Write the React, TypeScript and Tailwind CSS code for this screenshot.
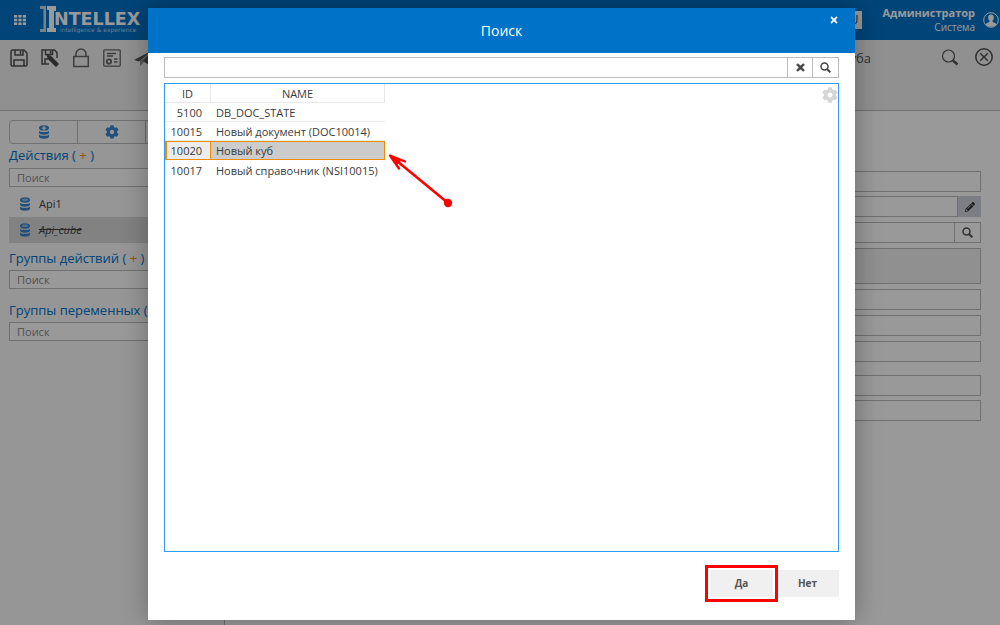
import React from 'react'
import { FaTimes, FaCog, FaPencilAlt } from 'react-icons/fa'

const rows = [
  { id: '5100', name: 'DB_DOC_STATE' },
  { id: '10015', name: 'Новый документ (DOC10014)' },
  { id: '10020', name: 'Новый куб', selected: true },
  { id: '10017', name: 'Новый справочник (NSI10015)' },
]

function Logo() {
  return (
    <svg width="104" height="30" viewBox="0 0 104 30" role="img" aria-label="Intellex">
      <path d="M0 1h6v26H0v-3h3.500V4H0z" fill="#c9d9e8" />
      <path d="M7 1h9v5h-2v17h2v4H7v-4h2V5H7z" fill="#fff" />
      <text x="14" y="20" fill="#fff" fontSize="17.5" fontWeight="700" fontFamily="DejaVu Sans, sans-serif">
        NTELLEX
      </text>
      <text x="20" y="27" fill="#b9d3ea" fontSize="6" fontFamily="DejaVu Sans, sans-serif">
        intelligence &amp; experience
      </text>
    </svg>
  )
}

function AppsIcon() {
  return (
    <svg width="12" height="10" viewBox="0 0 12 10" fill="#fff">
      {[0, 3.7, 7.4].map((y) =>
        [0, 4.4, 8.8].map((x) => (
          <rect key={x + '-' + y} x={x} y={y} width="3.2" height="2.6" />
        ))
      )}
    </svg>
  )
}

function SaveIcon({ edit = false }: { edit?: boolean }) {
  return (
    <svg width="18" height="18" viewBox="0 0 18 18" fill="none" stroke="#505050" strokeWidth="1.5">
      {edit ? (
        <>
          <path d="M8 15H1V1h12.500L16 3.500V9M4.500 1v4.500h7V1M9.500 2v2.500M4 15v-5h3" />
          <path d="M6.500 6.500l3 1 7.500 7.500-2 2L7.500 9.500z" fill="#484848" stroke="#484848" />
        </>
      ) : (
        <>
          <path d="M1 2.500Q1 1 2.500 1H14l3 3v11.500q0 1.500-1.500 1.500h-13Q1 17 1 15.500z" />
          <path d="M5 1v5h8V1M10.500 2v3M4 17v-6h10v6" />
        </>
      )}
    </svg>
  )
}

function LockIcon() {
  return (
    <svg width="18" height="20" viewBox="-1 0 18 20" fill="none" stroke="#666" strokeWidth="1.500">
      <rect x="0.750" y="8.500" width="14.500" height="10" />
      <path d="M3 8.500V6a5 5 0 0 1 10 0v2.500" />
    </svg>
  )
}

function CertificateIcon() {
  return (
    <svg width="18" height="18" viewBox="0 0 18 18" fill="none" stroke="#666" strokeWidth="1.300">
      <rect x="0.800" y="0.800" width="16.400" height="16.400" rx="1" />
      <path d="M4 4.500h9M4 7h6M11 10h3.500M11 13h3.500" />
      <circle cx="6" cy="12.500" r="2.200" strokeWidth="1.800" />
    </svg>
  )
}

function SendIcon() {
  return (
    <svg width="20" height="18" viewBox="0 0 20 18" fill="#505050">
      <path d="M19 1L0 11l5 1.500z" />
      <path d="M19 1L6 12v5l3-3z" opacity="0.600" />
      <path d="M19 1L9 12l6 4z" />
    </svg>
  )
}

function DatabaseIcon({ plus = false }: { plus?: boolean }) {
  return (
    <svg width="12" height="14" viewBox="0 0 12 14" fill="#3a86cc">
      <path d="M1 9.200c0 2 10 2 10 0v2.200c0 3-10 3-10 0z" />
      <path d="M1 5.400c0 2 10 2 10 0v2.200c0 3-10 3-10 0z" />
      <ellipse cx="6" cy="3" rx="5" ry="2.800" />
      {plus ? (
        <path d="M6 1v4.500M3.800 3.200h4.400" stroke="#fff" strokeWidth="1.200" />
      ) : (
        <ellipse cx="6" cy="2.800" rx="3.200" ry="1.200" fill="#8dbbe4" />
      )}
    </svg>
  )
}

function UserIcon() {
  return (
    <svg width="16" height="16" viewBox="0 0 16 16">
      <circle cx="8" cy="8" r="7.300" fill="none" stroke="#fff" />
      <path d="M8 2.500c2.200 0 3 1.500 2.800 3.500-.1 1.300-.7 2.200-1.300 2.800v1l3.300 1.700c.6.400.5 1 .2 1.300-2.600 2.700-7.400 2.700-10 0-.3-.3-.4-.9.200-1.300l3.300-1.700v-1C5.900 8.200 5.300 7.300 5.200 6 5 4 5.800 2.500 8 2.500z" fill="#fff" />
    </svg>
  )
}

function FindIcon() {
  return (
    <svg width="18" height="18" viewBox="0 0 18 18" fill="none" stroke="#555">
      <circle cx="7.500" cy="8" r="6" strokeWidth="1.200" />
      <path d="M12 12.500l4.500 4" strokeWidth="2.500" />
    </svg>
  )
}

function SmallFindIcon() {
  return (
    <svg width="11" height="11" viewBox="0 0 11 11" fill="none" stroke="currentColor" strokeWidth="1.500">
      <circle cx="4.500" cy="4.500" r="3.500" />
      <path d="M7 7l3.300 3.300" strokeWidth="2" />
    </svg>
  )
}

function CloseCircleIcon() {
  return (
    <svg width="18" height="18" viewBox="0 0 18 18" fill="none" stroke="#505050" strokeWidth="1.500">
      <circle cx="9" cy="9" r="8.200" />
      <path d="M5.200 5.200l7.600 7.600M12.800 5.200l-7.600 7.600" />
    </svg>
  )
}

function SideSearch({ label }: { label: string }) {
  return (
    <input
      type="text"
      placeholder="Поиск"
      aria-label={label}
      className="block h-[19px] w-full border border-[#bbb] bg-white px-[7px] text-[11px] placeholder:text-[#888]"
    />
  )
}

function SideTitle({ children }: { children: React.ReactNode }) {
  return (
    <h2 className="whitespace-nowrap text-[13px] leading-5 text-[#0072c8]">
      {children} ( <span className="text-[#f08c00]">+</span> )
    </h2>
  )
}

function Field({ label }: { label: string }) {
  return <input type="text" aria-label={label} className="block h-[21px] w-full border border-[#bbb] bg-white px-2" />
}

function Sidebar() {
  return (
    <aside className="w-[225px] shrink-0 border-r border-[#bbb] bg-[#fafafa] px-[9px] pt-[9px]">
      <div className="grid h-6 grid-cols-3 rounded-sm border border-[#bbb]">
        <button aria-label="Данные" className="flex items-center justify-center border-r border-[#bbb]">
          <DatabaseIcon plus />
        </button>
        <button aria-label="Настройки" className="flex items-center justify-center border-r border-[#bbb]">
          <FaCog className="size-[14px] text-[#3a86cc]" />
        </button>
        <button aria-label="Ещё"></button>
      </div>
      <div className="pt-px pb-[3px]">
        <SideTitle>Действия</SideTitle>
      </div>
      <SideSearch label="Поиск действий" />
      <ul className="mt-1 text-[11px] text-[#444]">
        <li className="flex h-[26px] items-center gap-2 pl-[10px]">
          <DatabaseIcon /> Api1
        </li>
        <li className="flex h-[26px] items-center gap-2 bg-[#d9d9d9] pl-[10px]">
          <DatabaseIcon /> <span className="italic line-through">Api_cube</span>
        </li>
      </ul>
      <div className="pt-[5px] pb-0.5">
        <SideTitle>Группы действий</SideTitle>
      </div>
      <SideSearch label="Поиск групп действий" />
      <div className="pt-[11px] pb-0.5">
        <SideTitle>Группы переменных</SideTitle>
      </div>
      <SideSearch label="Поиск групп переменных" />
    </aside>
  )
}

function Page() {
  return (
    <div className="flex min-h-screen flex-col">
      <header className="flex h-10 items-center bg-[#0072c8] pr-px pl-[14px] text-white">
        <button aria-label="Меню">
          <AppsIcon />
        </button>
        <a href="#" className="ml-[14px]">
          <Logo />
        </a>
        <button className="ml-auto h-[18px] w-6 bg-white text-right text-[12px] leading-[18px] text-[#444]">
          <span className="pr-1">RU</span>
        </button>
        <div className="ml-5 text-right">
          <div className="text-[11px] leading-[14px] font-bold">Администратор</div>
          <div className="text-[10px] leading-[14px]">Система</div>
        </div>
        <button aria-label="Профиль" className="ml-2">
          <UserIcon />
        </button>
      </header>

      <div className="flex h-[71px] items-start border-b border-[#bbb] bg-[#f0f0f0] pr-[7px] pl-[10px] pt-2">
        <div className="flex h-5 items-center gap-[13px]">
          <button aria-label="Сохранить"><SaveIcon /></button>
          <button aria-label="Сохранить как"><SaveIcon edit /></button>
          <button aria-label="Блокировка"><LockIcon /></button>
          <button aria-label="Документ"><CertificateIcon /></button>
          <button aria-label="Отправить"><SendIcon /></button>
        </div>
        <h1 className="ml-auto text-[13px] leading-5 text-[#555]">Действие куба</h1>
        <div className="ml-[70px] flex h-[18px] gap-4">
          <button aria-label="Найти"><FindIcon /></button>
          <button aria-label="Закрыть"><CloseCircleIcon /></button>
        </div>
      </div>

      <div className="flex grow">
        <Sidebar />
        <main className="grow bg-white pt-[60px] pr-[19px] pl-5">
          <div className="flex flex-col gap-1">
            <Field label="Код" />
            <div className="flex">
              <Field label="Имя" />
              <button aria-label="Изменить" className="flex h-[21px] w-[23px] shrink-0 items-center justify-center bg-[#d0d2dc] text-[#333]">
                <FaPencilAlt className="size-[10px]" />
              </button>
            </div>
          </div>
          <div className="mt-[5px] flex flex-col gap-[5px]">
            <div className="flex">
              <Field label="Объект" />
              <button aria-label="Выбрать" className="flex h-[21px] w-[26px] shrink-0 items-center justify-center border border-l-0 border-[#bbb] text-[#555]">
                <SmallFindIcon />
              </button>
            </div>
            <textarea aria-label="Описание" className="block h-9 w-full resize-none border border-[#bbb] bg-[#f0f0f0]" />
            <Field label="Параметр 1" />
            <Field label="Параметр 2" />
            <Field label="Параметр 3" />
          </div>
          <div className="mt-[13px] flex flex-col gap-1">
            <Field label="Параметр 4" />
            <Field label="Параметр 5" />
          </div>
        </main>
      </div>
    </div>
  )
}

function SearchDialog() {
  return (
    <div role="dialog" aria-label="Поиск" className="relative flex grow flex-col bg-white shadow-[0_0_25px_rgba(0,0,0,0.3)]">
      <div className="relative flex h-[45px] items-center justify-center bg-[#0072c8] text-white">
        <h2 className="text-[14px]">Поиск</h2>
        <button aria-label="Закрыть" className="absolute top-[7px] right-4">
          <FaTimes className="size-[10px]" />
        </button>
      </div>

      <div className="flex grow flex-col px-4 pt-1 pb-[23px]">
        <div className="flex h-[21px] border border-[#bbb] text-[#444]">
          <input type="text" aria-label="Строка поиска" className="grow px-2 text-[11px] outline-none" />
          <button aria-label="Очистить" className="flex w-[25px] items-center justify-center border-l border-[#bbb]">
            <FaTimes className="size-[11px]" stroke="currentColor" strokeWidth="30" />
          </button>
          <button aria-label="Найти" className="flex w-[26px] items-center justify-center border-l border-[#bbb]">
            <SmallFindIcon />
          </button>
        </div>

        <div className="relative mt-[5px] grow border border-[#2f9df4]">
          <table className="border-separate border-spacing-0 text-[11px] leading-[17px] text-[#3a3a3a]">
            <thead>
              <tr>
                <th className="h-[19px] w-[46px] border-r border-b border-[#e8e8e8] p-0 font-normal">ID</th>
                <th className="h-[19px] w-[174px] border-r border-b border-[#e8e8e8] p-0 font-normal">NAME</th>
              </tr>
            </thead>
            <tbody>
              {rows.map((row) =>
                row.selected ? (
                  <tr key={row.id}>
                    <td className="h-[19px] border border-l-2 border-[#f08c00] bg-[#ececec] p-0 pr-2 text-right">{row.id}</td>
                    <td className="h-[19px] border border-l-0 border-[#f08c00] bg-[#ccc] p-0 pl-[5px]">{row.name}</td>
                  </tr>
                ) : (
                  <tr key={row.id} className="group">
                    <td className="h-[19px] border-b border-[#ececec] p-0 pt-px pr-[9px] text-right group-last:border-b-0">{row.id}</td>
                    <td className="h-[19px] border-b border-[#ececec] p-0 pt-px pl-[5px] group-last:border-b-0">{row.name}</td>
                  </tr>
                )
              )}
            </tbody>
          </table>
          <button aria-label="Настройки" className="absolute top-[3px] right-0">
            <FaCog className="size-[16px] text-[#d5d5d5]" />
          </button>
          <svg className="absolute top-[68px] left-[222px]" width="70" height="60" viewBox="0 0 70 60" fill="none" stroke="#f00">
            <path d="M61 51L10 9" strokeWidth="2.600" />
            <path d="M18 9.500L3 3.500L12 16.500" strokeWidth="2.400" strokeLinejoin="round" strokeLinecap="round" />
            <path d="M3 3.500L14 9L10 13z" fill="#f00" stroke="none" />
            <circle cx="61" cy="51" r="4.200" fill="#f00" stroke="none" />
          </svg>
        </div>

        <div className="mt-[18px] flex justify-end gap-[3px] text-[10px] font-bold text-[#555]">
          <div className="relative">
            <button className="h-[27px] w-[63px] bg-[#f0f0f0]">Да</button>
            <div className="pointer-events-none absolute -inset-[5px] border-3 border-[#f00]"></div>
          </div>
          <button className="h-[27px] w-[63px] bg-[#f0f0f0]">Нет</button>
        </div>
      </div>
    </div>
  )
}

export default function App() {
  return (
    <div className="relative min-h-screen overflow-hidden font-['Open_Sans','Noto_Sans',sans-serif]">
      <Page />
      <div className="absolute inset-0 flex bg-black/40 pt-2 pr-[145px] pb-[5px] pl-[148px]">
        <SearchDialog />
      </div>
    </div>
  )
}
